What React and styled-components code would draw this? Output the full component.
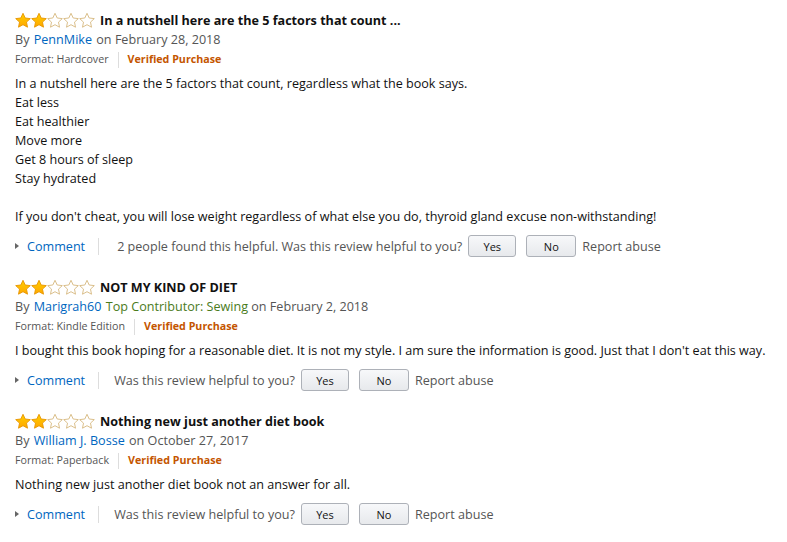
import React from 'react'
import styled, { createGlobalStyle } from 'styled-components'

const Global = createGlobalStyle`
  body {
    margin: 0;
    background: #fff;
    font-family: "Open Sans", "Noto Sans", sans-serif;
    color: #111;
  }
`

const Page = styled.div`
  padding: 10px 15px;
  display: flex;
  flex-direction: column;
  gap: 20px;
`

const Review = styled.div`
  display: flex;
  flex-direction: column;
`

const TitleRow = styled.div`
  display: flex;
  align-items: center;
  gap: 5px;
  height: 20px;
`

const Title = styled.span`
  font-weight: 700;
  font-size: 12.6px;
  color: #111;
`

const ByLine = styled.div`
  font-size: 12.6px;
  color: #555;
  line-height: 20px;

  a {
    color: #0066c0;
    text-decoration: none;
    margin: 0 1px;
  }
  .badge {
    color: #4a7b1c;
  }
`

const Meta = styled.div`
  display: flex;
  align-items: center;
  font-size: 10.7px;
  line-height: 19px;
  color: #555;

  .sep {
    width: 1px;
    height: 16px;
    background: #ddd;
    margin: 0 9px 0 9px;
  }
  .verified {
    color: #c45500;
    font-weight: 700;
  }
`

const Body = styled.div`
  font-size: 12.6px;
  line-height: 19px;
  color: #111;
  margin-top: 5px;
`

const Actions = styled.div`
  display: flex;
  align-items: center;
  font-size: 12.6px;
  color: #555;
  margin-top: 9px;
  height: 22px;
`

const CommentLink = styled.a`
  display: flex;
  align-items: center;
  color: #0066c0;
  text-decoration: none;
  &::before {
    content: '';
    border-left: 4px solid #666;
    border-top: 3px solid transparent;
    border-bottom: 3px solid transparent;
    margin-right: 8px;
  }
`

const Divider = styled.span`
  width: 1px;
  height: 17px;
  background: #ddd;
  margin: 0 ${p => p.$right}px 0 13px;
`

const VoteButton = styled.button`
  font-family: inherit;
  font-size: 11px;
  color: #111;
  width: ${p => p.$w}px;
  height: 22px;
  margin-left: ${p => p.$ml}px;
  border: 1px solid #adb1b8;
  border-radius: 3px;
  background: linear-gradient(#f7f8fa, #e7e9ec);
  padding: 0;
  cursor: pointer;
`

const Report = styled.span`
  margin-left: 6px;
  color: #555;
`

const starPath = 'M8 0.8l2.2 4.7 5.1.6-3.8 3.5 1 5.1L8 12.2l-4.5 2.5 1-5.1L.7 6.1l5.1-.6z'

const Stars = ({ count }) => (
  <svg width="80" height="16" viewBox="0 0 80 16">
    <defs>
      <linearGradient id="gold" x1="0" y1="0" x2="0" y2="1">
        <stop offset="0" stopColor="#ffce00" />
        <stop offset="1" stopColor="#ffa700" />
      </linearGradient>
    </defs>
    {[0, 1, 2, 3, 4].map(i => (
      <path
        key={i}
        d={starPath}
        transform={`translate(${i * 16} 0.5)`}
        fill={i < count ? 'url(#gold)' : '#fff'}
        stroke={i < count ? '#e69500' : '#d6b87e'}
        strokeWidth="0.9"
        strokeLinejoin="round"
      />
    ))}
  </svg>
)

const reviews = [
  {
    title: 'In a nutshell here are the 5 factors that count ...',
    author: 'PennMike',
    date: 'February 28, 2018',
    format: 'Hardcover',
    body: [
      'In a nutshell here are the 5 factors that count, regardless what the book says.',
      'Eat less',
      'Eat healthier',
      'Move more',
      'Get 8 hours of sleep',
      'Stay hydrated',
      '',
      "If you don't cheat, you will lose weight regardless of what else you do, thyroid gland excuse non-withstanding!",
    ],
    helpful: '2 people found this helpful. Was this review helpful to you?',
  },
  {
    title: 'NOT MY KIND OF DIET',
    author: 'Marigrah60',
    badge: 'Top Contributor: Sewing',
    date: 'February 2, 2018',
    format: 'Kindle Edition',
    body: [
      "I bought this book hoping for a reasonable diet. It is not my style. I am sure the information is good. Just that I don't eat this way.",
    ],
    helpful: 'Was this review helpful to you?',
  },
  {
    title: 'Nothing new just another diet book',
    author: 'William J. Bosse',
    date: 'October 27, 2017',
    format: 'Paperback',
    body: ['Nothing new just another diet book not an answer for all.'],
    helpful: 'Was this review helpful to you?',
  },
]

export default function App() {
  return (
    <>
      <Global />
      <Page>
        {reviews.map(r => (
          <Review key={r.title}>
            <TitleRow>
              <Stars count={2} />
              <Title>{r.title}</Title>
            </TitleRow>
            <ByLine>
              By <a href="#">{r.author}</a>{' '}
              {r.badge && <span className="badge">{r.badge} </span>}
              on {r.date}
            </ByLine>
            <Meta>
              Format: {r.format}
              <span className="sep" />
              <span className="verified">Verified Purchase</span>
            </Meta>
            <Body>
              {r.body.map((line, i) => (
                <div key={i}>{line || '\u00a0'}</div>
              ))}
            </Body>
            <Actions>
              <CommentLink href="#">Comment</CommentLink>
              <Divider $right={r.helpful.startsWith('2') ? 18 : 15} />
              <span>{r.helpful}</span>
              <VoteButton $w={48} $ml={6}>Yes</VoteButton>
              <VoteButton $w={50} $ml={10}>No</VoteButton>
              <Report>Report abuse</Report>
            </Actions>
          </Review>
        ))}
      </Page>
    </>
  )
}
